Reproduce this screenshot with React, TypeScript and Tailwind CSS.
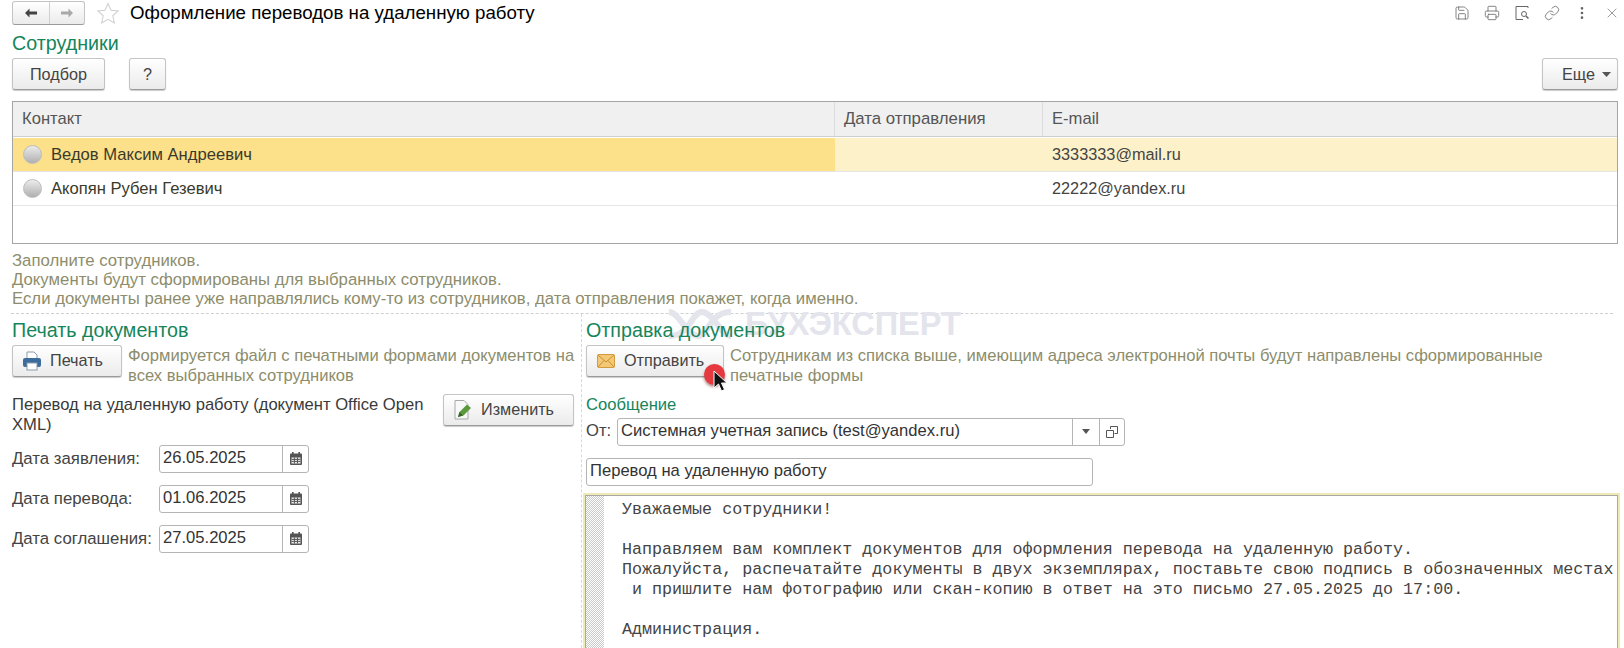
import { EllipsisVertical, Link, Printer, Save, X } from "lucide-react";
import type { ReactNode } from "react";

const employees = [
    { name: "Ведов Максим Андреевич", email: "3333333@mail.ru", selected: true },
    { name: "Акопян Рубен Гезевич", email: "22222@yandex.ru", selected: false },
];

const dates = [
    { label: "Дата заявления:", value: "26.05.2025" },
    { label: "Дата перевода:", value: "01.06.2025" },
    { label: "Дата соглашения:", value: "27.05.2025" },
];

const letter = [
    "Уважаемые сотрудники!",
    "",
    "Направляем вам комплект документов для оформления перевода на удаленную работу.",
    "Пожалуйста, распечатайте документы в двух экземплярах, поставьте свою подпись в обозначенных местах",
    " и пришлите нам фотографию или скан-копию в ответ на это письмо 27.05.2025 до 17:00.",
    "",
    "Администрация.",
];

const Btn = ({ className, children }: { className: string; children: ReactNode }) => (
    <div className={`flex h-[32px] shrink-0 items-center rounded-[3px] border border-[#c4c4c4] border-b-[#9a9a9a] bg-gradient-to-b from-white to-[#ebebeb] text-[16.2px] text-[#444] shadow-[0_1px_1px_rgba(0,0,0,0.2)] ${className}`}>
        {children}
    </div>
);

const SectionTitle = ({ children }: { children: ReactNode }) => (
    <div className="relative z-10 h-[20px] text-[19.7px] leading-[20px] text-[#16855a]">{children}</div>
);

const CalendarIcon = () => (
    <svg width="14" height="15" viewBox="0 0 14 15">
        <path d="M1 3.5a1 1 0 0 1 1-1h10a1 1 0 0 1 1 1V13a1 1 0 0 1-1 1H2a1 1 0 0 1-1-1z" fill="#555" />
        <rect x="3" y="1" width="1.6" height="3" fill="#555" />
        <rect x="9.4" y="1" width="1.6" height="3" fill="#555" />
        <path d="M2.5 6.5h9v6h-9z" fill="#eee" />
        <path d="M2.5 8.4h9M2.5 10.4h9M5.4 6.5v6M8.5 6.5v6" stroke="#555" strokeWidth="1" />
    </svg>
);

const PrintIcon = () => (
    <svg width="22" height="22" viewBox="0 0 22 22">
        <path d="M6 9V2h7l3 3v4z" fill="#fff" stroke="#8a9bad" />
        <rect x="2" y="8" width="18" height="9" rx="2" fill="#3b6c9c" />
        <rect x="6" y="13" width="10" height="7" fill="#fff" stroke="#8a9bad" />
    </svg>
);

const MailIcon = () => (
    <svg width="18" height="14" viewBox="0 0 18 14">
        <rect x="0.5" y="0.5" width="17" height="13" rx="1" fill="#f3c978" stroke="#d29a3a" />
        <path d="M1 1l8 7 8-7M1 13l6-6.5M17 13l-6-6.5" fill="none" stroke="#c98f2e" />
    </svg>
);

const EditIcon = () => (
    <svg width="20" height="22" viewBox="0 0 20 22">
        <path d="M2 1.5h9l4 4V20H2z" fill="#f8f8f8" stroke="#a8a8a8" />
        <path d="M5 18l1.5-5L14 5.5l4 3.5-7.5 7.5z" fill="#5b9a3c" />
        <path d="M5 18l1.5-5 3.5 3.5z" fill="#39632a" />
    </svg>
);

const App = () => {
    return (
        <div className="relative h-[648px] w-[1624px] overflow-hidden bg-white font-['Liberation_Sans',Arial,sans-serif] text-[16.6px] text-[#444]">
            {/* Title bar */}
            <div className="flex h-[26px] items-center pl-[12px] pr-[4px]">
                <div className="flex h-[24px] w-[73px] items-center rounded-[3px] border border-[#c4c4c4] border-b-[#9a9a9a] bg-gradient-to-b from-white to-[#ebebeb]">
                    <div className="flex h-full w-[37px] items-center justify-center border-r border-[#d0d0d0]">
                        <svg width="14" height="10" viewBox="0 0 14 10"><path d="M5.5 0.5L1 5l4.5 4.5V6.5H13v-3H5.5z" fill="#444" /></svg>
                    </div>
                    <div className="flex flex-1 items-center justify-center">
                        <svg width="14" height="10" viewBox="0 0 14 10"><path d="M8.5 0.5L13 5l-4.5 4.5V6.5H1v-3h7.5z" fill="#a9a9a9" /></svg>
                    </div>
                </div>
                <svg className="ml-[11px]" width="24" height="23" viewBox="0 0 22 22">
                    <path d="M11 1.5l2.9 6.4 6.8.7-5.1 4.6 1.5 6.8L11 16.5l-6.1 3.5 1.5-6.8L1.3 8.6l6.8-.7z" fill="none" stroke="#cfcfcf" />
                </svg>
                <div className="ml-[10px] pt-[1px] text-[18.7px] text-black">Оформление переводов на удаленную работу</div>
                <div className="ml-auto flex items-center gap-[14px] text-[#666]">
                    <Save size={16} strokeWidth={1.2} />
                    <Printer size={16} strokeWidth={1.2} />
                    <svg width="16" height="16" viewBox="0 0 16 16" fill="none" stroke="currentColor">
                        <path d="M14 3V1.5H2v13h7" />
                        <circle cx="10" cy="9" r="2.5" />
                        <path d="M12 11l2.5 2.5" strokeWidth="1.5" />
                    </svg>
                    <Link size={16} strokeWidth={1.2} />
                    <EllipsisVertical size={16} strokeWidth={2} />
                    <X size={16} strokeWidth={1} />
                </div>
            </div>

            {/* Employees */}
            <div className="pl-[12px] pr-[6px] pt-[7px]">
                <SectionTitle>Сотрудники</SectionTitle>
                <div className="mt-[5px] flex items-center">
                    <Btn className="w-[93px] justify-center">Подбор</Btn>
                    <Btn className="ml-[24px] w-[37px] justify-center">?</Btn>
                    <Btn className="ml-auto w-[76px] justify-end gap-[7px] pr-[6px]">
                        Еще
                        <svg width="9" height="5" viewBox="0 0 9 5"><path d="M0 0h9L4.500 5z" fill="#555" /></svg>
                    </Btn>
                </div>

                <div className="mt-[11px] h-[143px] border border-[#a5a5a5]">
                    <div className="flex h-[35px] border-b border-[#cfcfcf] bg-[#f0f0f0] leading-[33px] text-[#555]">
                        <div className="w-[822px] border-r border-[#dcdcdc] pl-[9px]">Контакт</div>
                        <div className="w-[208px] border-r border-[#dcdcdc] pl-[9px] text-[16.8px]">Дата отправления</div>
                        <div className="flex-1 pl-[9px]">E-mail</div>
                    </div>
                    {employees.map((employee) => (
                        <div key={employee.name} className={`flex h-[34px] border-b border-[#e6e6e6] leading-[32px] ${employee.selected ? "mt-[1px] bg-[#fdf1c9]" : ""}`}>
                            <div className={`flex w-[822px] items-center pl-[10px] ${employee.selected ? "bg-[#fce08a]" : ""}`}>
                                <div className="h-[19px] w-[19px] rounded-full border border-[#bdbdbd] bg-gradient-to-b from-[#ececec] to-[#b0b0b0]" />
                                <span className="ml-[9px] text-[#3a3a2a]">{employee.name}</span>
                            </div>
                            <div className="w-[208px]" />
                            <div className="flex-1 pl-[9px] text-[16.3px]">{employee.email}</div>
                        </div>
                    ))}
                </div>

                <div className="mt-[7px] text-[16.75px] leading-[19.2px] text-[#8d8d6c]">
                    <div>Заполните сотрудников.</div>
                    <div>Документы будут сформированы для выбранных сотрудников.</div>
                    <div>Если документы ранее уже направлялись кому-то из сотрудников, дата отправления покажет, когда именно.</div>
                </div>
            </div>

            <div className="mx-[11px] mt-[4px] border-t border-dashed border-[#d0d0d0]" />

            <div className="flex">
                {/* Print */}
                <div className="w-[581px] shrink-0 pl-[12px] pt-[6px]">
                    <SectionTitle>Печать документов</SectionTitle>
                    <div className="mt-[5px] flex">
                        <Btn className="w-[110px] gap-[7px] pl-[8px]">
                            <PrintIcon />
                            Печать
                        </Btn>
                        <div className="ml-[6px] pt-[1px] leading-[20px] text-[#8d8d6c]">
                            Формируется файл с печатными формами документов на всех выбранных сотрудников
                        </div>
                    </div>
                    <div className="mt-[9px] flex">
                        <div className="w-[431px] leading-[20px] text-[#3a3a3a]">Перевод на удаленную работу (документ Office Open XML)</div>
                        <Btn className="-mt-[1px] w-[131px] gap-[8px] pl-[9px]">
                            <EditIcon />
                            Изменить
                        </Btn>
                    </div>
                    <div className="mt-[10px] flex flex-col gap-[12px]">
                        {dates.map((date) => (
                            <div key={date.label} className="flex h-[28px] items-center">
                                <div className="w-[147px] text-[16.8px]">{date.label}</div>
                                <div className="flex h-[28px] w-[150px] items-center rounded-[3px] border border-[#b5b5b5]">
                                    <div className="flex-1 pl-[3px] text-[#333]">{date.value}</div>
                                    <div className="flex h-full w-[26px] items-center justify-center border-l border-[#b5b5b5]">
                                        <CalendarIcon />
                                    </div>
                                </div>
                            </div>
                        ))}
                    </div>
                </div>

                {/* Send */}
                <div className="flex-1 border-l border-dashed border-[#d8d8d8] pt-[6px]">
                    <div className="pl-[4px]">
                        <SectionTitle>Отправка документов</SectionTitle>
                        <div className="mt-[5px] flex">
                            <Btn className="w-[138px] gap-[9px] pl-[10px]">
                                <MailIcon />
                                Отправить
                            </Btn>
                            <div className="ml-[6px] pt-[1px] leading-[20px] text-[#8d8d6c]">
                                Сотрудникам из списка выше, имеющим адреса электронной почты будут направлены сформированные<br />печатные формы
                            </div>
                        </div>
                        <div className="mt-[9px] leading-[20px] text-[#16855a]">Сообщение</div>
                        <div className="mt-[3px] flex h-[28px] items-center">
                            <div className="w-[31px]">От:</div>
                            <div className="flex h-full w-[508px] items-center rounded-[3px] border border-[#b5b5b5]">
                                <div className="flex-1 pl-[3px] text-[#333]">Системная учетная запись (test@yandex.ru)</div>
                                <div className="flex h-full w-[27px] items-center justify-center border-l border-[#b5b5b5]">
                                    <svg width="8" height="5" viewBox="0 0 8 5"><path d="M0 0h8L4 5z" fill="#555" /></svg>
                                </div>
                                <div className="flex h-full w-[25px] items-center justify-center border-l border-[#b5b5b5]">
                                    <svg width="12" height="12" viewBox="0 0 12 12" fill="none" stroke="#555">
                                        <path d="M4.5 3V.5h7v7H8.5" />
                                        <path d="M.5 4.5h7v7h-7z" />
                                    </svg>
                                </div>
                            </div>
                        </div>
                        <div className="mt-[12px] flex h-[28px] w-[507px] items-center rounded-[3px] border border-[#b5b5b5] pl-[3px] text-[#333]">
                            Перевод на удаленную работу
                        </div>
                    </div>
                    <div className="ml-[1px] mr-[4px] mt-[7px] h-[200px] border-2 border-[#efe9b4] bg-[#fffef6]">
                        <div className="flex h-full border border-[#a8a8a8] bg-white">
                            <div className="w-[18px] bg-[repeating-conic-gradient(#c8c8c8_0_25%,#fff_0_50%)] bg-[length:2px_2px]" />
                            <pre className="pl-[18px] pt-[4px] font-['Liberation_Mono','Courier_New',monospace] text-[16.7px] leading-[20px] text-[#444]">
                                {letter.join("\n")}
                            </pre>
                        </div>
                    </div>
                </div>
            </div>

            {/* Watermark */}
            <div className="absolute left-[665px] top-[306px] flex items-center gap-[10px] text-[#e4e4ec]">
                <svg width="70" height="34" viewBox="0 0 70 34" fill="none" stroke="currentColor" strokeWidth="6">
                    <path d="M4 5c10 0 18 24 29 24S44 5 66 5" />
                    <path d="M66 29c-10 0-18-24-29-24S26 29 4 29" />
                </svg>
                <span className="text-[32.500px] font-bold leading-[36px]">БУХЭКСПЕРТ</span>
            </div>

            {/* Mouse pointer */}
            <div className="absolute left-[704px] top-[364px] h-[21px] w-[21px] rounded-full bg-[#e5383f] shadow-[0_2px_3px_rgba(100,0,0,0.5)]" />
            <svg className="absolute left-[713px] top-[370px]" width="16" height="24" viewBox="0 0 16 24">
                <path d="M1 1v17l4.500-4 3 7 3-1.500-3-6.500H14z" fill="#111" stroke="#fff" />
            </svg>
        </div>
    );
};

export default App;
